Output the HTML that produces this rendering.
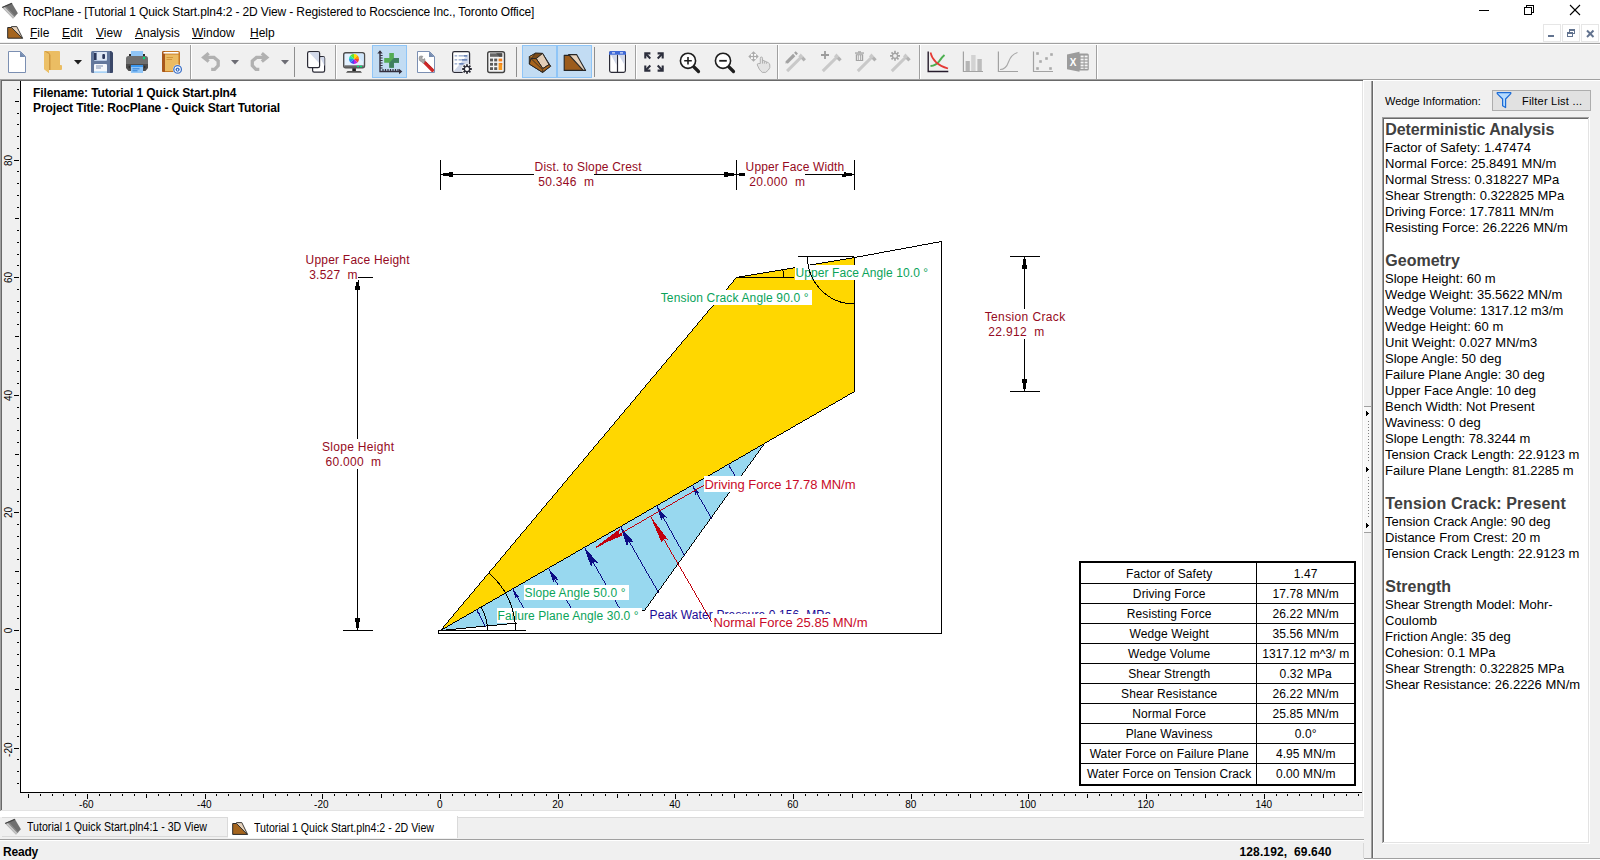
<!DOCTYPE html>
<html lang="en"><head><meta charset="utf-8"><title>RocPlane</title>
<style>

html,body{margin:0;padding:0}
body{width:1600px;height:860px;overflow:hidden;position:relative;background:#f0f0f0;
 font-family:"Liberation Sans",sans-serif;font-size:12px;color:#000}
.a{position:absolute}
.t{position:absolute;white-space:nowrap;line-height:1}
#titlebar{left:0;top:0;width:1600px;height:42px;background:#fff}
#title{left:23px;top:6px;font-size:12px;letter-spacing:-0.125px}
.menu{top:27px;font-size:12px}
.menu u{text-decoration:underline;text-decoration-thickness:1px;text-underline-offset:1px}
.ln{position:absolute}
.tab{position:absolute;font-size:12px;white-space:nowrap;line-height:1;transform-origin:0 0;transform:scaleX(0.885)}
#status{left:3px;top:846px;font-weight:bold;font-size:12px;letter-spacing:-0.2px}
#coords{left:1239.5px;top:846px;font-weight:bold;font-size:12px;letter-spacing:0.12px}

#pn text{font-family:"Liberation Sans",sans-serif;white-space:pre}

#dg text{font-family:"Liberation Sans",sans-serif;white-space:pre}

</style></head>
<body>
<div class="a" id="titlebar"></div>
<svg class="a" style="left:1px;top:2px" width="18" height="18" viewBox="0 0 18 18">
<polygon points="1,5.2 10.8,1 16.9,11.3 12,16.4" fill="#6f6f6f"/>
<polygon points="1,5.2 3.4,4.2 13.6,15.1 12,16.4" fill="#c4c4c4"/>
<polygon points="3.4,4.2 4.6,3.7 14.400,14.400 13.600,15.1" fill="#8c8c8c"/>
<polygon points="0.8,5 10.6,0.8 11.400,1.800 1.6,6" fill="#444"/>
</svg>
<div class="t" id="title">RocPlane - [Tutorial 1 Quick Start.pln4:2 - 2D View - Registered to Rocscience Inc., Toronto Office]</div>
<svg class="a" style="left:1470px;top:0" width="130" height="22" viewBox="0 0 130 22" shape-rendering="crispEdges">
<rect x="9" y="10" width="10" height="1" fill="#000"/>
<rect x="56.5" y="5.5" width="7" height="7" fill="none" stroke="#000"/>
<rect x="54.5" y="7.5" width="7" height="7" fill="#fff" stroke="#000"/>
<g shape-rendering="auto" stroke="#000" stroke-width="1.1"><line x1="100" y1="5" x2="110" y2="15"/><line x1="110" y1="5" x2="100" y2="15"/></g>
</svg>
<svg class="a" style="left:6px;top:24px" width="18" height="16" viewBox="0 0 18 16">
<polygon points="1.7,3.5 5.5,3.5 16.3,14.2 1.7,14.2" fill="#a5651e" stroke="#2a2a2a" stroke-width="1"/>
<polygon points="5.5,2.600 10.8,2.6 16.600,14.2 16.3,14.2 5.5,3.5" fill="#e6d2bc" stroke="#2a2a2a" stroke-width="0.9" stroke-linejoin="round"/>
</svg>
<div class="t menu" style="left:30px"><u>F</u>ile</div>
<div class="t menu" style="left:62px"><u>E</u>dit</div>
<div class="t menu" style="left:96px"><u>V</u>iew</div>
<div class="t menu" style="left:135px"><u>A</u>nalysis</div>
<div class="t menu" style="left:192px"><u>W</u>indow</div>
<div class="t menu" style="left:250px"><u>H</u>elp</div>
<svg class="a" style="left:1540px;top:22px" width="60" height="21" viewBox="0 0 60 21" shape-rendering="crispEdges">
<rect x="3.5" y="2.5" width="17" height="17" fill="#fff" stroke="#e6e6e6"/>
<rect x="22.5" y="2.5" width="17" height="17" fill="#fff" stroke="#e6e6e6"/>
<rect x="41.5" y="2.5" width="17" height="17" fill="#fff" stroke="#e6e6e6"/>
<rect x="8" y="13" width="6" height="2" fill="#62738f"/>
<g fill="none" stroke="#62738f"><rect x="29.5" y="7.5" width="5" height="4"/><rect x="27.5" y="10.5" width="5" height="4" fill="#fff"/></g>
<rect x="29" y="7" width="6" height="2" fill="#62738f"/><rect x="27" y="10" width="6" height="2" fill="#62738f"/>
<g shape-rendering="auto" stroke="#62738f" stroke-width="2"><line x1="47" y1="8.5" x2="53.5" y2="15"/><line x1="53.5" y1="8.5" x2="47" y2="15"/></g>
</svg>
<div class="ln" style="left:0px;top:42px;width:1600px;height:1px;background:#f0f0f0;"></div>
<div class="ln" style="left:0px;top:43px;width:1600px;height:1px;background:#a0a0a0;"></div>
<div class="ln" style="left:0px;top:44px;width:1600px;height:1px;background:#ffffff;"></div>
<div class="ln" style="left:0px;top:79px;width:1364px;height:1px;background:#a0a0a0;"></div>
<div class="ln" style="left:0px;top:80px;width:1363px;height:1px;background:#696969;"></div>
<div class="ln" style="left:0px;top:79px;width:1px;height:732px;background:#a0a0a0;"></div>
<div class="ln" style="left:1px;top:80px;width:1px;height:730px;background:#696969;"></div>
<div class="ln" style="left:1362px;top:81px;width:1px;height:730px;background:#e3e3e3;"></div>
<div class="ln" style="left:1363px;top:80px;width:1px;height:732px;background:#ffffff;"></div>
<div class="ln" style="left:1px;top:810px;width:1362px;height:1px;background:#e3e3e3;"></div>
<div class="ln" style="left:0px;top:811px;width:1364px;height:1px;background:#ffffff;"></div>
<div class="ln" style="left:21px;top:81px;width:1341px;height:711px;background:#ffffff;"></div>
<div class="ln" style="left:20px;top:81px;width:1px;height:712px;background:#000;"></div>
<div class="ln" style="left:20px;top:792px;width:1342px;height:1px;background:#000;"></div>
<div class="ln" style="left:0px;top:812px;width:1364px;height:5px;background:#ffffff;"></div>
<div class="ln" style="left:2px;top:817px;width:226px;height:1px;background:#dadada;"></div>
<div class="ln" style="left:227px;top:817px;width:1px;height:20px;background:#dadada;"></div>
<div class="ln" style="left:2px;top:836px;width:226px;height:1px;background:#dadada;"></div>
<div class="ln" style="left:228px;top:816px;width:229px;height:22px;background:#ffffff;"></div>
<div class="ln" style="left:457px;top:816px;width:1px;height:22px;background:#dadada;"></div>
<div class="ln" style="left:458px;top:817px;width:906px;height:1px;background:#dadada;"></div>
<div class="ln" style="left:0px;top:839px;width:1364px;height:1px;background:#a0a0a0;"></div>
<div class="ln" style="left:0px;top:840px;width:1364px;height:1px;background:#ffffff;"></div>
<svg class="a" style="left:4px;top:818px" width="18" height="18" viewBox="0 0 18 18">
<polygon points="1,5.2 10.8,1 16.9,11.3 12,16.4" fill="#6f6f6f"/>
<polygon points="1,5.2 3.4,4.2 13.6,15.1 12,16.4" fill="#c4c4c4"/>
<polygon points="3.4,4.2 4.6,3.7 14.400,14.400 13.600,15.1" fill="#8c8c8c"/>
<polygon points="0.8,5 10.6,0.8 11.400,1.800 1.6,6" fill="#444"/>
</svg>
<div class="tab" style="left:27px;top:821px">Tutorial 1 Quick Start.pln4:1 - 3D View</div>
<svg class="a" style="left:231px;top:820px" width="18" height="16" viewBox="0 0 18 16">
<polygon points="1.7,3.5 5.5,3.5 16.3,14.4 1.7,14.4" fill="#a5651e" stroke="#2a2a2a" stroke-width="1"/>
<polygon points="5.5,2.600 10.8,2.6 16.600,14.4 16.3,14.4 5.5,3.5" fill="#e6d2bc" stroke="#2a2a2a" stroke-width="0.9" stroke-linejoin="round"/>
</svg>
<div class="tab" style="left:254px;top:822px">Tutorial 1 Quick Start.pln4:2 - 2D View</div>
<div class="t" id="status">Ready</div>
<div class="t" id="coords">128.192,&nbsp; 69.640</div>
<div class="ln" style="left:190px;top:45px;width:1px;height:34px;background:#a0a0a0;"></div>
<div class="ln" style="left:191px;top:45px;width:1px;height:34px;background:#ffffff;"></div>
<div class="ln" style="left:335px;top:45px;width:1px;height:34px;background:#a0a0a0;"></div>
<div class="ln" style="left:336px;top:45px;width:1px;height:34px;background:#ffffff;"></div>
<div class="ln" style="left:635px;top:45px;width:1px;height:34px;background:#a0a0a0;"></div>
<div class="ln" style="left:636px;top:45px;width:1px;height:34px;background:#ffffff;"></div>
<div class="ln" style="left:777px;top:45px;width:1px;height:34px;background:#a0a0a0;"></div>
<div class="ln" style="left:778px;top:45px;width:1px;height:34px;background:#ffffff;"></div>
<div class="ln" style="left:919px;top:45px;width:1px;height:34px;background:#a0a0a0;"></div>
<div class="ln" style="left:920px;top:45px;width:1px;height:34px;background:#ffffff;"></div>
<div class="ln" style="left:1096px;top:45px;width:1px;height:34px;background:#a0a0a0;"></div>
<div class="ln" style="left:1097px;top:45px;width:1px;height:34px;background:#ffffff;"></div>
<div class="ln" style="left:294px;top:47px;width:1px;height:30px;background:#8e8e8e;"></div>
<div class="ln" style="left:516px;top:47px;width:1px;height:30px;background:#8e8e8e;"></div>
<div class="ln" style="left:594px;top:47px;width:1px;height:30px;background:#8e8e8e;"></div>
<div class="a" style="left:372px;top:45px;width:33px;height:31px;background:#c2dcf3;border:1px solid #8fc5f7"></div>
<div class="a" style="left:522px;top:45px;width:33px;height:31px;background:#c2dcf3;border:1px solid #8fc5f7"></div>
<div class="a" style="left:557px;top:45px;width:33px;height:31px;background:#c2dcf3;border:1px solid #8fc5f7"></div>
<svg class="a" style="left:0;top:44px" width="1600" height="36" viewBox="0 44 1600 36">
<g><path d="M8.5,51.5 H20.5 L25.5,56.5 V72.5 H8.5 Z" fill="#fff" stroke="#7b8fb2" stroke-width="1"/>
<path d="M20,51.5 L25.5,57 H20 Z" fill="#748bb0"/></g>
<g><path d="M45,51 H59 Q60,51 60,52 V65 H61 Q62,65 62,66 V69 Q62,70 61,70 H49 V73 L44,69 V52 Q44,51 45,51 Z" fill="#ebbd63"/>
<path d="M44,51.2 L49,54 V73 L44,69 Z" fill="#ecc067"/>
<path d="M45.5,51 Q49.5,52 50.5,55 V70 H49 V54 L44.5,51.3 Z" fill="#cf9840"/></g>
<polygon points="74,60 82,60 78,64.5" fill="#1e1e1e"/><polygon points="231,60 239,60 235,64.5" fill="#6c6c74"/><polygon points="281,60 289,60 285,64.5" fill="#6c6c74"/>
<g><path d="M92.5,51 H111 L113,53 V71.5 Q113,73 111.5,73 H92.5 Q91,73 91,71.5 V52.5 Q91,51 92.5,51 Z" fill="#63779c"/>
<path d="M110,51 H111 L113,53 V71.5 Q113,73 111.5,73 H110 Z" fill="#3a4768"/>
<rect x="94" y="52" width="13" height="9" rx="1" fill="#b7c8e3"/><rect x="97" y="52" width="10" height="8" rx="1" fill="#dfe7f4"/>
<rect x="94" y="53" width="2.5" height="7" fill="#2b365a"/>
<rect x="102.3" y="54" width="2.7" height="5" rx="1" fill="#2b365a"/>
<path d="M94,65 Q94,64 95,64 H106 Q107,64 107,65 V73 H94 Z" fill="#f6f8fc"/>
<rect x="94" y="71.3" width="13" height="1.7" fill="#a9d3f7"/>
<rect x="96" y="65.5" width="7" height="1" fill="#7c8db0"/><rect x="96" y="67.5" width="5" height="1" fill="#7c8db0"/></g>
<g><rect x="131" y="51" width="12" height="7" fill="#90c5f6"/>
<rect x="129" y="54" width="2" height="3" fill="#2c2c2c"/><rect x="143" y="54" width="2" height="3" fill="#2c2c2c"/>
<path d="M128.5,56 H145.5 Q148,56 148,58.5 V65 H126 V58.5 Q126,56 128.5,56 Z" fill="#6f6f6f"/>
<path d="M126,64 H148 V68 L145.5,71 H128.5 L126,68 Z" fill="#4c4c4c"/>
<path d="M128,67 l2,-1.6 v3.2 z M146,67 l-2,-1.6 v3.2 z" fill="#2e2e2e"/>
<circle cx="144" cy="58" r="1.2" fill="#00e676"/>
<rect x="131" y="65" width="12" height="8" fill="#90c5f6"/><rect x="131" y="65" width="12" height="2" fill="#3b97ee"/>
<rect x="132.5" y="68.3" width="7" height="1" fill="#2f80d8"/><rect x="132.5" y="70.3" width="5" height="1" fill="#2f80d8"/></g>
<g><path d="M163.5,51 H178.5 Q180,51 180,52.5 V70.5 Q180,72 178.5,72 H163.5 Q162,72 162,70.5 V52.5 Q162,51 163.5,51 Z" fill="#c57824"/>
<path d="M162,52.5 Q162,51 163.5,51 H165 V72 H163.5 Q162,72 162,70.5 Z" fill="#a8581c"/>
<rect x="165" y="54.5" width="13.5" height="16.5" fill="#ebbb62"/>
<rect x="163.5" y="52" width="15" height="1.6" fill="#fff"/>
<rect x="166.5" y="57" width="6.5" height="1" fill="#d2953a"/><rect x="166.5" y="59" width="5.5" height="1" fill="#d2953a"/>
<circle cx="177.6" cy="69.4" r="4.8" fill="#f4f4f4"/><circle cx="177.6" cy="69.4" r="3.8" fill="#fff" stroke="#3a6fc6" stroke-width="1.3"/>
<circle cx="177.6" cy="69.6" r="2.1" fill="#3a6fc6"/><rect x="177.100" y="68.9" width="1" height="1.8" fill="#fff"/></g>
<g fill="none" stroke="#b1b1b1" stroke-width="3.3" stroke-linejoin="miter">
<path d="M208.7,53.3 L203.7,57.4 L208.7,61.5"/><path d="M204.5,57.4 H214 L218.2,61 V65.6 L214.6,69.3 H211.2"/>
<path d="M261.8,53.3 L266.8,57.4 L261.8,61.5"/><path d="M266,57.4 H256.500 L252.3,61 V65.6 L255.900,69.3 H259.3"/></g>
<g stroke="#2b2b36" stroke-width="1.2"><rect x="312.6" y="56.6" width="12" height="15.6" rx="1.6" fill="#fff"/>
<path d="M320,57 H323.5 Q324.5,57 324.5,58 V66 Z" fill="#d2d9ea" stroke="none"/>
<rect x="307.6" y="51.6" width="12" height="16" rx="1.6" fill="#fff"/>
<path d="M309,52.3 H318 Q319,52.3 319,53.3 V63 Z" fill="#d2d9ea" stroke="none"/></g>
<g><rect x="343.7" y="52.7" width="20.8" height="15" rx="2" fill="#e4f2ff" stroke="#4e4e4e" stroke-width="1.4"/>
<path d="M353,53.5 H362 Q363.7,53.5 363.7,55 V62 Z" fill="#cfe6fb"/>
<rect x="344.4" y="65.3" width="19.4" height="2.2" fill="#6a6a6a"/>
<rect x="357" y="65.8" width="2" height="1.4" fill="#00e676"/><rect x="360" y="65.8" width="2" height="1.4" fill="#00e676"/>
<rect x="352.3" y="68.3" width="3.6" height="3" fill="#1e1e1e"/><path d="M347.5,71 H360.5 L362,72.8 H346 Z" fill="#555"/>
<g transform="translate(354 59)">
<path d="M0,0 L0,-5 A5,5 0 0 1 3.54,-3.54 Z" fill="#ffe000"/><path d="M0,0 L3.54,-3.54 A5,5 0 0 1 5,0 Z" fill="#ff9800"/>
<path d="M0,0 L5,0 A5,5 0 0 1 3.54,3.54 Z" fill="#f44336"/><path d="M0,0 L3.54,3.54 A5,5 0 0 1 0,5 Z" fill="#c020e0"/>
<path d="M0,0 L0,5 A5,5 0 0 1 -3.54,3.54 Z" fill="#5040f0"/><path d="M0,0 L-3.54,3.54 A5,5 0 0 1 -5,0 Z" fill="#2090f0"/>
<path d="M0,0 L-5,0 A5,5 0 0 1 -3.54,-3.54 Z" fill="#20e0b0"/><path d="M0,0 L-3.54,-3.54 A5,5 0 0 1 0,-5 Z" fill="#60e030"/></g></g>
<g><path d="M380,51 V71.5 H401" fill="none" stroke="#34303f" stroke-width="1.4"/>
<path d="M377.3,53.6 L380,50.3 L382.7,53.6 Z" fill="#34303f"/><path d="M399,68.8 L402.3,71.5 L399,74.2 Z" fill="#34303f"/>
<path d="M380,55.5 h2.6 M380,58 h2.6 M380,60.5 h2.6 M380,63 h2.6 M380,65.5 h2.6 M380,68 h2.6 M383,71.5 v-2.6 M385.5,71.5 v-2.6 M388,71.5 v-2.6 M390.500,71.5 v-2.6 M393,71.5 v-2.6 M395.5,71.5 v-2.6 M398,71.5 v-2.6" stroke="#34303f" stroke-width="1.2"/>
<path d="M389.3,53 H393.9 V58 H399 V62.7 H393.9 V67.7 H389.3 V62.7 H384.2 V58 H389.3 Z" fill="#54ac55"/>
<path d="M399,58 V62.7 H393.9 V67.7 H389.3 V62.7 L393.9,58 Z" fill="#3f7f60"/></g>
<g><path d="M417.5,51.5 H429.5 L434.5,56.5 V72.5 H417.5 Z" fill="#fff" stroke="#7b8fb2" stroke-width="1"/>
<path d="M429,51.5 L434.5,57 H429 Z" fill="#748bb0"/>
<path d="M424.8,62.6 L432.4,70.2" stroke="#cf2828" stroke-width="3.4" stroke-linecap="round"/>
<path d="M425.8,62 L433.2,69.400" stroke="#a51e1e" stroke-width="1" stroke-dasharray="1 1"/>
<path d="M419.6,56.4 Q421.5,55.6 422.8,56.4 L421.6,58.2 L423.2,59.6 L424.6,58.6 Q425.3,60.5 424.6,62.2 L423.4,63.4 Q421.5,61.5 419.6,60.6 Q418.8,58.2 419.6,56.4 Z" fill="#a9a9a9" stroke="#777" stroke-width="0.6"/></g>
<g><rect x="452.6" y="51.6" width="17" height="20.8" rx="1.8" fill="#fff" stroke="#2b2b36" stroke-width="1.2"/>
<path d="M468.8,53 V71.6 H453.6 Z" fill="#d2d9ea"/>
<g fill="#a9b8d6"><rect x="454.6" y="55" width="2.6" height="1.6"/><rect x="454.6" y="59" width="2.6" height="1.6"/><rect x="454.6" y="63" width="2.6" height="1.6"/>
<rect x="458.6" y="55" width="8.6" height="1.6"/><rect x="458.6" y="59" width="8.6" height="1.6"/><rect x="458.6" y="63" width="6" height="1.6"/></g>
<g fill="#6d86b8"><rect x="464" y="55" width="3.2" height="1.6"/><rect x="462" y="59" width="5.2" height="1.6"/><rect x="459.500" y="63" width="4" height="1.6"/></g>
<circle cx="467" cy="69" r="5.6" fill="#f0f0f0"/>
<g stroke="#2b2b36" stroke-width="1.8" stroke-linecap="butt"><path d="M467,64.2 V73.8 M462.2,69 H471.8 M463.6,65.6 L470.4,72.4 M470.4,65.6 L463.6,72.4"/></g>
<circle cx="467" cy="69" r="3.1" fill="#2b2b36"/><circle cx="467" cy="69" r="2" fill="#fff"/></g>
<g><rect x="487.700" y="51.7" width="16.8" height="20.8" rx="2" fill="#f3f3f3" stroke="#444" stroke-width="1.4"/>
<rect x="490" y="53.3" width="12.2" height="3.5" fill="#666"/><path d="M496,53.3 H502.2 V56.8 H499.500 Z" fill="#4c4c4c"/>
<g fill="#5a5a5a"><rect x="490" y="58.6" width="3" height="2.8"/><rect x="494.2" y="58.6" width="3" height="2.8"/>
<rect x="490" y="62.9" width="3" height="2.8"/><rect x="494.2" y="62.9" width="3" height="2.8"/>
<rect x="490" y="67.2" width="3" height="2.8"/><rect x="494.2" y="67.2" width="3" height="2.8"/></g>
<rect x="498.600" y="58.6" width="3.600" height="2.8" fill="#f07f1c"/><rect x="498.600" y="62.9" width="3.600" height="7.1" fill="#f7991f"/>
<path d="M498.6,62.9 H502.2 V65 Z" fill="#ee7a18"/></g>
<g stroke="#262626" stroke-width="1" stroke-linejoin="round">
<path d="M529.300,56.7 L535.6,53.2 L542.600,53.4 L550.600,66.2 L542.600,72.4 L529.300,64 Z" fill="#a6631b"/>
<path d="M529.300,56.7 L535.600,53.2 L537,55 L531,58.600 Z" fill="#c37d2c" stroke-width="0.8"/>
<path d="M535.6,53.2 L542.6,53.4 L536.2,58.6 L531,58.6 Z" fill="#7a4a18" stroke-width="0.7"/>
<path d="M536.2,58.6 L542.6,53.4 L549,64.6 L542.8,68.6 Z" fill="#e2cdb6"/>
<path d="M542.8,68.6 L549,64.6 L550.6,66.2 L542.6,72.4 L529.3,64 L531,58.600 L536.2,58.6 Z" fill="#a6631b"/>
<path d="M531,58.6 L542.800,70 L542.6,72.4" fill="none" stroke-width="0.8"/></g>
<g stroke="#262626" stroke-width="1.1" stroke-linejoin="round">
<path d="M564.2,55.4 H569.5 L585.4,70.4 H564.2 Z" fill="#9c5c1c"/>
<path d="M568.6,54.6 H576.6 L585.6,70.4 L583.200,70.4 L569.5,55.4 Z" fill="#e6d1ba"/></g>
<g><rect x="609.6" y="51.6" width="15.800" height="20.8" rx="1.8" fill="#fff" stroke="#2b2b36" stroke-width="1.2"/>
<path d="M610.4,54 H616.6 V65 Z M618.2,54 H624.600 V65 Z" fill="#d2d9ea"/>
<path d="M609,54.8 V53 Q609,51 611,51 H624 Q626,51 626,53 V54.800 Z" fill="#3f6ad8"/>
<rect x="612" y="52.4" width="3" height="1" fill="#fff"/><rect x="620" y="52.4" width="3" height="1" fill="#fff"/>
<path d="M617.5,54.8 V72.400" stroke="#2b2b36" stroke-width="1.2"/></g>
<g fill="none" stroke="#2d2f3d" stroke-width="2.1" stroke-linejoin="miter">
<path d="M645.300,58.500 V53.4 H650.4"/><path d="M646,54.1 L650.3,58.4"/>
<path d="M662.700,58.5 V53.4 H657.6"/><path d="M662,54.1 L657.700,58.4"/>
<path d="M645.3,65.5 V70.600 H650.4"/><path d="M646,69.9 L650.3,65.6"/>
<path d="M662.7,65.5 V70.6 H657.6"/><path d="M662,69.9 L657.7,65.600"/></g>
<g><path d="M693.5,66.5 L698.5,71.5" stroke="#1e1e1e" stroke-width="3.2" stroke-linecap="round"/>
<circle cx="688" cy="60.8" r="7.6" fill="#fff" stroke="#1e1e1e" stroke-width="1.600"/>
<path d="M684.2,60.8 H691.8 M688,57 V64.600" stroke="#1e1e1e" stroke-width="1.6"/></g>
<g><path d="M728.5,66.5 L733.5,71.5" stroke="#1e1e1e" stroke-width="3.2" stroke-linecap="round"/>
<circle cx="723" cy="60.8" r="7.6" fill="#fff" stroke="#1e1e1e" stroke-width="1.6"/>
<path d="M719.200,60.8 H726.8" stroke="#1e1e1e" stroke-width="1.8"/></g>
<g><path d="M753.5,51.3 L758.7,56.5 L753.5,61.700 L748.3,56.5 Z" fill="#ababab"/>
<g fill="#fbfbfb"><rect x="750.9" y="53.9" width="2" height="2"/><rect x="754.1" y="53.9" width="2" height="2"/><rect x="750.9" y="57.1" width="2" height="2"/><rect x="754.100" y="57.1" width="2" height="2"/></g>
<path d="M760.3,63.5 V58.3 Q760.3,57 761.4,57 Q762.5,57 762.5,58.3 V60 L768.3,62.7 Q769.8,63.500 769.8,65 V67.600 Q769,70 765.7,72.4 H762.3 Q760.5,71 759.3,69.1 L757.3,65 Q757,63.600 758.4,63.5 Z" fill="#e3e3e3" stroke="#a9a9a9" stroke-width="0.9" stroke-linejoin="round"/>
<path d="M762.5,60 V63.6 M764.4,61.2 V63.600 M766.4,62.2 V63.8" stroke="#a9a9a9" stroke-width="0.9" fill="none"/></g>
<path d="M787.1,71.2 L801.3,57" stroke="#c9c9c9" stroke-width="3.1" stroke-linecap="butt"/><path d="M801.7,57.2 L804.8,60.3" stroke="#b2b2b2" stroke-width="3.3"/><path d="M798.3,56.4 L800.7,53.4 L803.5,56.6 L801.3,58.8 Z" fill="#c9c9c9"/><path d="M786.600,62.6 L794.2,55" stroke="#a3a3a3" stroke-width="3.2"/><path d="M785.3,63.600 L787.5,63 L785.900,61.400 Z" fill="#a3a3a3"/><path d="M795.2,54 L796.800,52.4" stroke="#a3a3a3" stroke-width="3.2"/>
<path d="M822.8,71.2 L837.0,57" stroke="#c9c9c9" stroke-width="3.1" stroke-linecap="butt"/><path d="M837.4,57.2 L840.5,60.3" stroke="#b2b2b2" stroke-width="3.3"/><path d="M834.0,56.4 L836.4,53.4 L839.2,56.6 L837.0,58.8 Z" fill="#c9c9c9"/><path d="M821,55 H829 M825,51 V59" stroke="#9c9c9c" stroke-width="1.8"/>
<path d="M857.8,71.2 L872.0,57" stroke="#c9c9c9" stroke-width="3.1" stroke-linecap="butt"/><path d="M872.4,57.2 L875.5,60.3" stroke="#b2b2b2" stroke-width="3.3"/><path d="M869.0,56.4 L871.4,53.4 L874.2,56.6 L872.0,58.8 Z" fill="#c9c9c9"/><g fill="#a3a3a3"><rect x="855" y="52.4" width="9" height="1.3"/><rect x="858" y="51.3" width="3" height="1.2"/><path d="M855.8,54.3 H863.200 V61 H855.8 Z M857.200,55.300 V60 H858.300 V55.300 Z M859,55.3 V60 H860 V55.3 Z M860.8,55.3 V60 H861.8 V55.3 Z" fill-rule="evenodd"/></g>
<path d="M891.8,71.2 L906.0,57" stroke="#c9c9c9" stroke-width="3.1" stroke-linecap="butt"/><path d="M906.4,57.2 L909.5,60.3" stroke="#b2b2b2" stroke-width="3.3"/><path d="M903.0,56.4 L905.4,53.4 L908.2,56.6 L906.0,58.8 Z" fill="#c9c9c9"/><g stroke="#a3a3a3" stroke-width="1.7" stroke-linecap="butt"><path d="M895,50.800 V60.8 M890,55.8 H900 M891.5,52.3 L898.5,59.3 M898.500,52.3 L891.5,59.300"/></g>
<circle cx="895" cy="55.8" r="3" fill="#a3a3a3"/><circle cx="895" cy="55.8" r="1.900" fill="#f0f0f0"/>
<g fill="none"><path d="M930.5,66 Q936,65.5 939,61.500 Q942,57 944.500,55" stroke="#4caf50" stroke-width="2"/>
<path d="M930.5,52.5 Q933,64 948,68.6" stroke="#e53935" stroke-width="1.600"/>
<path d="M928.2,51.5 V71.5 H948.3" stroke="#261c2c" stroke-width="1.400"/></g>
<g><rect x="965.6" y="61" width="4.2" height="10.500" fill="#b5b5b5"/><rect x="971.200" y="55" width="4.4" height="16.5" fill="#d2d2d2"/><rect x="977.400" y="59" width="4.4" height="12.5" fill="#bcbcbc"/>
<path d="M963.4,51.500 V71.5 H983" fill="none" stroke="#a2a2a2" stroke-width="1.200"/></g>
<g fill="none"><path d="M1000,69.500 Q1006,69.500 1008.500,62 Q1011,54.5 1017.500,52.400" stroke="#a8a8a8" stroke-width="1.1"/>
<path d="M998.4,51.5 V71.5 H1018" stroke="#a2a2a2" stroke-width="1.2"/></g>
<g fill="#ababab"><rect x="1036.200" y="52.200" width="2.6" height="2.6"/><rect x="1050.2" y="53.200" width="2.6" height="2.600"/><rect x="1045.2" y="57.2" width="2.6" height="2.6"/>
<rect x="1039.200" y="60.200" width="2.6" height="2.6"/><rect x="1036.200" y="67.200" width="2.6" height="2.6"/><rect x="1049.2" y="67.2" width="2.6" height="2.6"/>
<path d="M1033.500,51.5 V71.5 H1053" fill="none" stroke="#a2a2a2" stroke-width="1.2"/></g>
<g><rect x="1076" y="53.6" width="12.800" height="16.800" rx="1.5" fill="#9c9c9c"/>
<g fill="#f4f4f4"><rect x="1080.6" y="55.600" width="3" height="1.800"/><rect x="1084.6" y="55.6" width="3" height="1.8"/>
<rect x="1080.6" y="58.600" width="3" height="1.8"/><rect x="1084.600" y="58.6" width="3" height="1.8"/>
<rect x="1080.6" y="61.6" width="3" height="1.8"/><rect x="1084.6" y="61.600" width="3" height="1.8"/>
<rect x="1080.600" y="64.6" width="3" height="1.8"/><rect x="1084.6" y="64.6" width="3" height="1.800"/>
<rect x="1080.6" y="67.6" width="3" height="1.3"/><rect x="1084.6" y="67.6" width="3" height="1.3"/></g>
<path d="M1067,54.4 L1079.500,51.800 V71.800 L1067,69.200 Z" fill="#9c9c9c"/>
<text x="1073.1" y="65.600" font-family="Liberation Sans, sans-serif" font-size="10px" font-weight="bold" fill="#fff" text-anchor="middle">X</text></g>
</svg>
<svg class="a" style="left:0;top:0" width="1364" height="812" viewBox="0 0 1364 812">
<g shape-rendering="crispEdges" fill="#000">
<rect x="17" y="783" width="2" height="1"/><rect x="17" y="771" width="2" height="1"/><rect x="17" y="759" width="2" height="1"/><rect x="14" y="748" width="5" height="1"/><rect x="17" y="736" width="2" height="1"/><rect x="17" y="724" width="2" height="1"/><rect x="17" y="712" width="2" height="1"/><rect x="17" y="701" width="2" height="1"/><rect x="15" y="689" width="4" height="1"/><rect x="17" y="677" width="2" height="1"/><rect x="17" y="665" width="2" height="1"/><rect x="17" y="654" width="2" height="1"/><rect x="17" y="642" width="2" height="1"/><rect x="14" y="630" width="5" height="1"/><rect x="17" y="618" width="2" height="1"/><rect x="17" y="606" width="2" height="1"/><rect x="17" y="595" width="2" height="1"/><rect x="17" y="583" width="2" height="1"/><rect x="15" y="571" width="4" height="1"/><rect x="17" y="559" width="2" height="1"/><rect x="17" y="548" width="2" height="1"/><rect x="17" y="536" width="2" height="1"/><rect x="17" y="524" width="2" height="1"/><rect x="14" y="512" width="5" height="1"/><rect x="17" y="501" width="2" height="1"/><rect x="17" y="489" width="2" height="1"/><rect x="17" y="477" width="2" height="1"/><rect x="17" y="465" width="2" height="1"/><rect x="15" y="454" width="4" height="1"/><rect x="17" y="442" width="2" height="1"/><rect x="17" y="430" width="2" height="1"/><rect x="17" y="418" width="2" height="1"/><rect x="17" y="407" width="2" height="1"/><rect x="14" y="395" width="5" height="1"/><rect x="17" y="383" width="2" height="1"/><rect x="17" y="371" width="2" height="1"/><rect x="17" y="360" width="2" height="1"/><rect x="17" y="348" width="2" height="1"/><rect x="15" y="336" width="4" height="1"/><rect x="17" y="324" width="2" height="1"/><rect x="17" y="312" width="2" height="1"/><rect x="17" y="301" width="2" height="1"/><rect x="17" y="289" width="2" height="1"/><rect x="14" y="277" width="5" height="1"/><rect x="17" y="265" width="2" height="1"/><rect x="17" y="254" width="2" height="1"/><rect x="17" y="242" width="2" height="1"/><rect x="17" y="230" width="2" height="1"/><rect x="15" y="218" width="4" height="1"/><rect x="17" y="207" width="2" height="1"/><rect x="17" y="195" width="2" height="1"/><rect x="17" y="183" width="2" height="1"/><rect x="17" y="171" width="2" height="1"/><rect x="14" y="160" width="5" height="1"/><rect x="17" y="148" width="2" height="1"/><rect x="17" y="136" width="2" height="1"/><rect x="17" y="124" width="2" height="1"/><rect x="17" y="113" width="2" height="1"/><rect x="15" y="101" width="4" height="1"/><rect x="17" y="89" width="2" height="1"/>
<rect x="28" y="794" width="1" height="4"/><rect x="40" y="794" width="1" height="2"/><rect x="52" y="794" width="1" height="2"/><rect x="63" y="794" width="1" height="2"/><rect x="75" y="794" width="1" height="2"/><rect x="87" y="794" width="1" height="5"/><rect x="99" y="794" width="1" height="2"/><rect x="110" y="794" width="1" height="2"/><rect x="122" y="794" width="1" height="2"/><rect x="134" y="794" width="1" height="2"/><rect x="146" y="794" width="1" height="4"/><rect x="158" y="794" width="1" height="2"/><rect x="169" y="794" width="1" height="2"/><rect x="181" y="794" width="1" height="2"/><rect x="193" y="794" width="1" height="2"/><rect x="205" y="794" width="1" height="5"/><rect x="216" y="794" width="1" height="2"/><rect x="228" y="794" width="1" height="2"/><rect x="240" y="794" width="1" height="2"/><rect x="252" y="794" width="1" height="2"/><rect x="263" y="794" width="1" height="4"/><rect x="275" y="794" width="1" height="2"/><rect x="287" y="794" width="1" height="2"/><rect x="299" y="794" width="1" height="2"/><rect x="311" y="794" width="1" height="2"/><rect x="322" y="794" width="1" height="5"/><rect x="334" y="794" width="1" height="2"/><rect x="346" y="794" width="1" height="2"/><rect x="358" y="794" width="1" height="2"/><rect x="369" y="794" width="1" height="2"/><rect x="381" y="794" width="1" height="4"/><rect x="393" y="794" width="1" height="2"/><rect x="405" y="794" width="1" height="2"/><rect x="416" y="794" width="1" height="2"/><rect x="428" y="794" width="1" height="2"/><rect x="440" y="794" width="1" height="5"/><rect x="452" y="794" width="1" height="2"/><rect x="464" y="794" width="1" height="2"/><rect x="475" y="794" width="1" height="2"/><rect x="487" y="794" width="1" height="2"/><rect x="499" y="794" width="1" height="4"/><rect x="511" y="794" width="1" height="2"/><rect x="522" y="794" width="1" height="2"/><rect x="534" y="794" width="1" height="2"/><rect x="546" y="794" width="1" height="2"/><rect x="558" y="794" width="1" height="5"/><rect x="569" y="794" width="1" height="2"/><rect x="581" y="794" width="1" height="2"/><rect x="593" y="794" width="1" height="2"/><rect x="605" y="794" width="1" height="2"/><rect x="617" y="794" width="1" height="4"/><rect x="628" y="794" width="1" height="2"/><rect x="640" y="794" width="1" height="2"/><rect x="652" y="794" width="1" height="2"/><rect x="664" y="794" width="1" height="2"/><rect x="675" y="794" width="1" height="5"/><rect x="687" y="794" width="1" height="2"/><rect x="699" y="794" width="1" height="2"/><rect x="711" y="794" width="1" height="2"/><rect x="722" y="794" width="1" height="2"/><rect x="734" y="794" width="1" height="4"/><rect x="746" y="794" width="1" height="2"/><rect x="758" y="794" width="1" height="2"/><rect x="770" y="794" width="1" height="2"/><rect x="781" y="794" width="1" height="2"/><rect x="793" y="794" width="1" height="5"/><rect x="805" y="794" width="1" height="2"/><rect x="817" y="794" width="1" height="2"/><rect x="828" y="794" width="1" height="2"/><rect x="840" y="794" width="1" height="2"/><rect x="852" y="794" width="1" height="4"/><rect x="864" y="794" width="1" height="2"/><rect x="875" y="794" width="1" height="2"/><rect x="887" y="794" width="1" height="2"/><rect x="899" y="794" width="1" height="2"/><rect x="911" y="794" width="1" height="5"/><rect x="922" y="794" width="1" height="2"/><rect x="934" y="794" width="1" height="2"/><rect x="946" y="794" width="1" height="2"/><rect x="958" y="794" width="1" height="2"/><rect x="970" y="794" width="1" height="4"/><rect x="981" y="794" width="1" height="2"/><rect x="993" y="794" width="1" height="2"/><rect x="1005" y="794" width="1" height="2"/><rect x="1017" y="794" width="1" height="2"/><rect x="1028" y="794" width="1" height="5"/><rect x="1040" y="794" width="1" height="2"/><rect x="1052" y="794" width="1" height="2"/><rect x="1064" y="794" width="1" height="2"/><rect x="1075" y="794" width="1" height="2"/><rect x="1087" y="794" width="1" height="4"/><rect x="1099" y="794" width="1" height="2"/><rect x="1111" y="794" width="1" height="2"/><rect x="1123" y="794" width="1" height="2"/><rect x="1134" y="794" width="1" height="2"/><rect x="1146" y="794" width="1" height="5"/><rect x="1158" y="794" width="1" height="2"/><rect x="1170" y="794" width="1" height="2"/><rect x="1181" y="794" width="1" height="2"/><rect x="1193" y="794" width="1" height="2"/><rect x="1205" y="794" width="1" height="4"/><rect x="1217" y="794" width="1" height="2"/><rect x="1228" y="794" width="1" height="2"/><rect x="1240" y="794" width="1" height="2"/><rect x="1252" y="794" width="1" height="2"/><rect x="1264" y="794" width="1" height="5"/><rect x="1276" y="794" width="1" height="2"/><rect x="1287" y="794" width="1" height="2"/><rect x="1299" y="794" width="1" height="2"/><rect x="1311" y="794" width="1" height="2"/><rect x="1323" y="794" width="1" height="4"/><rect x="1334" y="794" width="1" height="2"/><rect x="1346" y="794" width="1" height="2"/><rect x="1358" y="794" width="1" height="2"/>
</g>
<g font-family="Liberation Sans, sans-serif" font-size="10px" fill="#000" text-anchor="middle">
<text x="86.3" y="807.6">-60</text><text x="204.3" y="807.6">-40</text><text x="321.3" y="807.6">-20</text><text x="439.8" y="807.6">0</text><text x="557.8" y="807.6">20</text><text x="674.8" y="807.6">40</text><text x="792.8" y="807.6">60</text><text x="910.8" y="807.6">80</text><text x="1027.8" y="807.6">100</text><text x="1145.8" y="807.6">120</text><text x="1263.8" y="807.6">140</text>
<text transform="translate(12 749.7) rotate(-90)">-20</text><text transform="translate(12 630.5) rotate(-90)">0</text><text transform="translate(12 512.5) rotate(-90)">20</text><text transform="translate(12 395.5) rotate(-90)">40</text><text transform="translate(12 277.5) rotate(-90)">60</text><text transform="translate(12 160.5) rotate(-90)">80</text>
</g>
</svg>
<svg id="dg" class="a" style="left:0;top:0" width="1364" height="812" viewBox="0 0 1364 812">
<g shape-rendering="crispEdges">
<polygon points="440.5,630.5 736.5,277.5 854.5,257.5 854.5,391.5" fill="#ffd700"/>
<polygon points="440.5,630.5 764.5,443.5 644.5,610.5" fill="#98d8ef"/>
<path d="M438 630h1v4h-1zM438 633h504v1h-504zM941 241h1v393h-1zM939 241h3v1h-3zM933 242h6v1h-6zM928 243h5v1h-5zM922 244h6v1h-6zM917 245h5v1h-5zM912 246h5v1h-5zM906 247h6v1h-6zM901 248h5v1h-5zM895 249h6v1h-6zM890 250h5v1h-5zM884 251h6v1h-6zM879 252h5v1h-5zM874 253h5v1h-5zM868 254h6v1h-6zM863 255h5v1h-5zM857 256h6v1h-6zM854 257h3v1h-3z" fill="#000"/>
<path d="M438 630h3v1h-3zM440 630h1v1h-1zM441 629h1v1h-1zM442 628h1v1h-1zM443 626h1v2h-1zM444 625h1v1h-1zM445 624h1v1h-1zM446 623h1v1h-1zM447 622h1v1h-1zM448 620h1v2h-1zM449 619h1v1h-1zM450 618h1v1h-1zM451 617h1v1h-1zM452 616h1v1h-1zM453 614h1v2h-1zM454 613h1v1h-1zM455 612h1v1h-1zM456 611h1v1h-1zM457 610h1v1h-1zM458 608h1v2h-1zM459 607h1v1h-1zM460 606h1v1h-1zM461 605h1v1h-1zM462 604h1v1h-1zM463 602h1v2h-1zM464 601h1v1h-1zM465 600h1v1h-1zM466 599h1v1h-1zM467 598h1v1h-1zM468 597h1v1h-1zM469 595h1v2h-1zM470 594h1v1h-1zM471 593h1v1h-1zM472 592h1v1h-1zM473 591h1v1h-1zM474 589h1v2h-1zM475 588h1v1h-1zM476 587h1v1h-1zM477 586h1v1h-1zM478 585h1v1h-1zM479 583h1v2h-1zM480 582h1v1h-1zM481 581h1v1h-1zM482 580h1v1h-1zM483 579h1v1h-1zM484 577h1v2h-1zM485 576h1v1h-1zM486 575h1v1h-1zM487 574h1v1h-1zM488 573h1v1h-1zM489 571h1v2h-1zM490 570h1v1h-1zM491 569h1v1h-1zM492 568h1v1h-1zM493 567h1v1h-1zM494 566h1v1h-1zM495 564h1v2h-1zM496 563h1v1h-1zM497 562h1v1h-1zM498 561h1v1h-1zM499 560h1v1h-1zM500 558h1v2h-1zM501 557h1v1h-1zM502 556h1v1h-1zM503 555h1v1h-1zM504 554h1v1h-1zM505 552h1v2h-1zM506 551h1v1h-1zM507 550h1v1h-1zM508 549h1v1h-1zM509 548h1v1h-1zM510 546h1v2h-1zM511 545h1v1h-1zM512 544h1v1h-1zM513 543h1v1h-1zM514 542h1v1h-1zM515 540h1v2h-1zM516 539h1v1h-1zM517 538h1v1h-1zM518 537h1v1h-1zM519 536h1v1h-1zM520 534h1v2h-1zM521 533h1v1h-1zM522 532h1v1h-1zM523 531h1v1h-1zM524 530h1v1h-1zM525 529h1v1h-1zM526 527h1v2h-1zM527 526h1v1h-1zM528 525h1v1h-1zM529 524h1v1h-1zM530 523h1v1h-1zM531 521h1v2h-1zM532 520h1v1h-1zM533 519h1v1h-1zM534 518h1v1h-1zM535 517h1v1h-1zM536 515h1v2h-1zM537 514h1v1h-1zM538 513h1v1h-1zM539 512h1v1h-1zM540 511h1v1h-1zM541 509h1v2h-1zM542 508h1v1h-1zM543 507h1v1h-1zM544 506h1v1h-1zM545 505h1v1h-1zM546 503h1v2h-1zM547 502h1v1h-1zM548 501h1v1h-1zM549 500h1v1h-1zM550 499h1v1h-1zM551 498h1v1h-1zM552 496h1v2h-1zM553 495h1v1h-1zM554 494h1v1h-1zM555 493h1v1h-1zM556 492h1v1h-1zM557 490h1v2h-1zM558 489h1v1h-1zM559 488h1v1h-1zM560 487h1v1h-1zM561 486h1v1h-1zM562 484h1v2h-1zM563 483h1v1h-1zM564 482h1v1h-1zM565 481h1v1h-1zM566 480h1v1h-1zM567 478h1v2h-1zM568 477h1v1h-1zM569 476h1v1h-1zM570 475h1v1h-1zM571 474h1v1h-1zM572 472h1v2h-1zM573 471h1v1h-1zM574 470h1v1h-1zM575 469h1v1h-1zM576 468h1v1h-1zM577 467h1v1h-1zM578 465h1v2h-1zM579 464h1v1h-1zM580 463h1v1h-1zM581 462h1v1h-1zM582 461h1v1h-1zM583 459h1v2h-1zM584 458h1v1h-1zM585 457h1v1h-1zM586 456h1v1h-1zM587 455h1v1h-1zM588 453h1v2h-1zM589 452h1v1h-1zM590 451h1v1h-1zM591 450h1v1h-1zM592 449h1v1h-1zM593 447h1v2h-1zM594 446h1v1h-1zM595 445h1v1h-1zM596 444h1v1h-1zM597 443h1v1h-1zM598 441h1v2h-1zM599 440h1v1h-1zM600 439h1v1h-1zM601 438h1v1h-1zM602 437h1v1h-1zM603 436h1v1h-1zM604 434h1v2h-1zM605 433h1v1h-1zM606 432h1v1h-1zM607 431h1v1h-1zM608 430h1v1h-1zM609 428h1v2h-1zM610 427h1v1h-1zM611 426h1v1h-1zM612 425h1v1h-1zM613 424h1v1h-1zM614 422h1v2h-1zM615 421h1v1h-1zM616 420h1v1h-1zM617 419h1v1h-1zM618 418h1v1h-1zM619 416h1v2h-1zM620 415h1v1h-1zM621 414h1v1h-1zM622 413h1v1h-1zM623 412h1v1h-1zM624 410h1v2h-1zM625 409h1v1h-1zM626 408h1v1h-1zM627 407h1v1h-1zM628 406h1v1h-1zM629 405h1v1h-1zM630 403h1v2h-1zM631 402h1v1h-1zM632 401h1v1h-1zM633 400h1v1h-1zM634 399h1v1h-1zM635 397h1v2h-1zM636 396h1v1h-1zM637 395h1v1h-1zM638 394h1v1h-1zM639 393h1v1h-1zM640 391h1v2h-1zM641 390h1v1h-1zM642 389h1v1h-1zM643 388h1v1h-1zM644 387h1v1h-1zM645 385h1v2h-1zM646 384h1v1h-1zM647 383h1v1h-1zM648 382h1v1h-1zM649 381h1v1h-1zM650 379h1v2h-1zM651 378h1v1h-1zM652 377h1v1h-1zM653 376h1v1h-1zM654 375h1v1h-1zM655 374h1v1h-1zM656 372h1v2h-1zM657 371h1v1h-1zM658 370h1v1h-1zM659 369h1v1h-1zM660 368h1v1h-1zM661 366h1v2h-1zM662 365h1v1h-1zM663 364h1v1h-1zM664 363h1v1h-1zM665 362h1v1h-1zM666 360h1v2h-1zM667 359h1v1h-1zM668 358h1v1h-1zM669 357h1v1h-1zM670 356h1v1h-1zM671 354h1v2h-1zM672 353h1v1h-1zM673 352h1v1h-1zM674 351h1v1h-1zM675 350h1v1h-1zM676 348h1v2h-1zM677 347h1v1h-1zM678 346h1v1h-1zM679 345h1v1h-1zM680 344h1v1h-1zM681 342h1v2h-1zM682 341h1v1h-1zM683 340h1v1h-1zM684 339h1v1h-1zM685 338h1v1h-1zM686 337h1v1h-1zM687 335h1v2h-1zM688 334h1v1h-1zM689 333h1v1h-1zM690 332h1v1h-1zM691 331h1v1h-1zM692 329h1v2h-1zM693 328h1v1h-1zM694 327h1v1h-1zM695 326h1v1h-1zM696 325h1v1h-1zM697 323h1v2h-1zM698 322h1v1h-1zM699 321h1v1h-1zM700 320h1v1h-1zM701 319h1v1h-1zM702 317h1v2h-1zM703 316h1v1h-1zM704 315h1v1h-1zM705 314h1v1h-1zM706 313h1v1h-1zM707 311h1v2h-1zM708 310h1v1h-1zM709 309h1v1h-1zM710 308h1v1h-1zM711 307h1v1h-1zM712 306h1v1h-1zM713 304h1v2h-1zM714 303h1v1h-1zM715 302h1v1h-1zM716 301h1v1h-1zM717 300h1v1h-1zM718 298h1v2h-1zM719 297h1v1h-1zM720 296h1v1h-1zM721 295h1v1h-1zM722 294h1v1h-1zM723 292h1v2h-1zM724 291h1v1h-1zM725 290h1v1h-1zM726 289h1v1h-1zM727 288h1v1h-1zM728 286h1v2h-1zM729 285h1v1h-1zM730 284h1v1h-1zM731 283h1v1h-1zM732 282h1v1h-1zM733 280h1v2h-1zM734 279h1v1h-1zM735 278h1v1h-1zM736 277h1v1h-1zM736 277h3v1h-3zM739 276h6v1h-6zM745 275h6v1h-6zM751 274h6v1h-6zM757 273h6v1h-6zM763 272h6v1h-6zM769 271h6v1h-6zM775 270h6v1h-6zM781 269h6v1h-6zM787 268h6v1h-6zM793 267h5v1h-5zM798 266h6v1h-6zM804 265h6v1h-6zM810 264h6v1h-6zM816 263h6v1h-6zM822 262h6v1h-6zM828 261h6v1h-6zM834 260h6v1h-6zM840 259h6v1h-6zM846 258h6v1h-6zM852 257h3v1h-3zM854 257h1v135h-1zM854 391h1v1h-1zM852 392h2v1h-2zM850 393h2v1h-2zM848 394h2v1h-2zM847 395h1v1h-1zM845 396h2v1h-2zM843 397h2v1h-2zM842 398h1v1h-1zM840 399h2v1h-2zM838 400h2v1h-2zM836 401h2v1h-2zM835 402h1v1h-1zM833 403h2v1h-2zM831 404h2v1h-2zM829 405h2v1h-2zM828 406h1v1h-1zM826 407h2v1h-2zM824 408h2v1h-2zM822 409h2v1h-2zM821 410h1v1h-1zM819 411h2v1h-2zM817 412h2v1h-2zM816 413h1v1h-1zM814 414h2v1h-2zM812 415h2v1h-2zM810 416h2v1h-2zM809 417h1v1h-1zM807 418h2v1h-2zM805 419h2v1h-2zM803 420h2v1h-2zM802 421h1v1h-1zM800 422h2v1h-2zM798 423h2v1h-2zM796 424h2v1h-2zM795 425h1v1h-1zM793 426h2v1h-2zM791 427h2v1h-2zM790 428h1v1h-1zM788 429h2v1h-2zM786 430h2v1h-2zM784 431h2v1h-2zM783 432h1v1h-1zM781 433h2v1h-2zM779 434h2v1h-2zM777 435h2v1h-2zM776 436h1v1h-1zM774 437h2v1h-2zM772 438h2v1h-2zM770 439h2v1h-2zM769 440h1v1h-1zM767 441h2v1h-2zM765 442h2v1h-2zM764 443h1v1h-1zM762 444h2v1h-2zM760 445h2v1h-2zM758 446h2v1h-2zM757 447h1v1h-1zM755 448h2v1h-2zM753 449h2v1h-2zM751 450h2v1h-2zM750 451h1v1h-1zM748 452h2v1h-2zM746 453h2v1h-2zM745 454h1v1h-1zM743 455h2v1h-2zM741 456h2v1h-2zM739 457h2v1h-2zM738 458h1v1h-1zM736 459h2v1h-2zM734 460h2v1h-2zM732 461h2v1h-2zM731 462h1v1h-1zM729 463h2v1h-2zM727 464h2v1h-2zM725 465h2v1h-2zM724 466h1v1h-1zM722 467h2v1h-2zM720 468h2v1h-2zM719 469h1v1h-1zM717 470h2v1h-2zM715 471h2v1h-2zM713 472h2v1h-2zM712 473h1v1h-1zM710 474h2v1h-2zM708 475h2v1h-2zM706 476h2v1h-2zM705 477h1v1h-1zM703 478h2v1h-2zM701 479h2v1h-2zM699 480h2v1h-2zM698 481h1v1h-1zM696 482h2v1h-2zM694 483h2v1h-2zM693 484h1v1h-1zM691 485h2v1h-2zM689 486h2v1h-2zM687 487h2v1h-2zM686 488h1v1h-1zM684 489h2v1h-2zM682 490h2v1h-2zM680 491h2v1h-2zM679 492h1v1h-1zM677 493h2v1h-2zM675 494h2v1h-2zM673 495h2v1h-2zM672 496h1v1h-1zM670 497h2v1h-2zM668 498h2v1h-2zM667 499h1v1h-1zM665 500h2v1h-2zM663 501h2v1h-2zM661 502h2v1h-2zM660 503h1v1h-1zM658 504h2v1h-2zM656 505h2v1h-2zM654 506h2v1h-2zM653 507h1v1h-1zM651 508h2v1h-2zM649 509h2v1h-2zM647 510h2v1h-2zM646 511h1v1h-1zM644 512h2v1h-2zM642 513h2v1h-2zM641 514h1v1h-1zM639 515h2v1h-2zM637 516h2v1h-2zM635 517h2v1h-2zM634 518h1v1h-1zM632 519h2v1h-2zM630 520h2v1h-2zM628 521h2v1h-2zM627 522h1v1h-1zM625 523h2v1h-2zM623 524h2v1h-2zM622 525h1v1h-1zM620 526h2v1h-2zM618 527h2v1h-2zM616 528h2v1h-2zM615 529h1v1h-1zM613 530h2v1h-2zM611 531h2v1h-2zM609 532h2v1h-2zM608 533h1v1h-1zM606 534h2v1h-2zM604 535h2v1h-2zM602 536h2v1h-2zM601 537h1v1h-1zM599 538h2v1h-2zM597 539h2v1h-2zM596 540h1v1h-1zM594 541h2v1h-2zM592 542h2v1h-2zM590 543h2v1h-2zM589 544h1v1h-1zM587 545h2v1h-2zM585 546h2v1h-2zM583 547h2v1h-2zM582 548h1v1h-1zM580 549h2v1h-2zM578 550h2v1h-2zM576 551h2v1h-2zM575 552h1v1h-1zM573 553h2v1h-2zM571 554h2v1h-2zM570 555h1v1h-1zM568 556h2v1h-2zM566 557h2v1h-2zM564 558h2v1h-2zM563 559h1v1h-1zM561 560h2v1h-2zM559 561h2v1h-2zM557 562h2v1h-2zM556 563h1v1h-1zM554 564h2v1h-2zM552 565h2v1h-2zM550 566h2v1h-2zM549 567h1v1h-1zM547 568h2v1h-2zM545 569h2v1h-2zM544 570h1v1h-1zM542 571h2v1h-2zM540 572h2v1h-2zM538 573h2v1h-2zM537 574h1v1h-1zM535 575h2v1h-2zM533 576h2v1h-2zM531 577h2v1h-2zM530 578h1v1h-1zM528 579h2v1h-2zM526 580h2v1h-2zM525 581h1v1h-1zM523 582h2v1h-2zM521 583h2v1h-2zM519 584h2v1h-2zM518 585h1v1h-1zM516 586h2v1h-2zM514 587h2v1h-2zM512 588h2v1h-2zM511 589h1v1h-1zM509 590h2v1h-2zM507 591h2v1h-2zM505 592h2v1h-2zM504 593h1v1h-1zM502 594h2v1h-2zM500 595h2v1h-2zM499 596h1v1h-1zM497 597h2v1h-2zM495 598h2v1h-2zM493 599h2v1h-2zM492 600h1v1h-1zM490 601h2v1h-2zM488 602h2v1h-2zM486 603h2v1h-2zM485 604h1v1h-1zM483 605h2v1h-2zM481 606h2v1h-2zM479 607h2v1h-2zM478 608h1v1h-1zM476 609h2v1h-2zM474 610h2v1h-2zM473 611h1v1h-1zM471 612h2v1h-2zM469 613h2v1h-2zM467 614h2v1h-2zM466 615h1v1h-1zM464 616h2v1h-2zM462 617h2v1h-2zM460 618h2v1h-2zM459 619h1v1h-1zM457 620h2v1h-2zM455 621h2v1h-2zM453 622h2v1h-2zM452 623h1v1h-1zM450 624h2v1h-2zM448 625h2v1h-2zM447 626h1v1h-1zM445 627h2v1h-2zM443 628h2v1h-2zM441 629h2v1h-2zM440 630h1v1h-1z" fill="#000"/>
<path d="M764 443h1v1h-1zM763 444h1v2h-1zM762 446h1v1h-1zM761 447h1v1h-1zM760 448h1v2h-1zM759 450h1v1h-1zM758 451h1v2h-1zM757 453h1v1h-1zM756 454h1v1h-1zM755 455h1v2h-1zM754 457h1v1h-1zM753 458h1v2h-1zM752 460h1v1h-1zM751 461h1v1h-1zM750 462h1v2h-1zM749 464h1v1h-1zM748 465h1v1h-1zM747 466h1v2h-1zM746 468h1v1h-1zM745 469h1v2h-1zM744 471h1v1h-1zM743 472h1v1h-1zM742 473h1v2h-1zM741 475h1v1h-1zM740 476h1v2h-1zM739 478h1v1h-1zM738 479h1v1h-1zM737 480h1v2h-1zM736 482h1v1h-1zM735 483h1v2h-1zM734 485h1v1h-1zM733 486h1v1h-1zM732 487h1v2h-1zM731 489h1v1h-1zM730 490h1v2h-1zM729 492h1v1h-1zM728 493h1v1h-1zM727 494h1v2h-1zM726 496h1v1h-1zM725 497h1v1h-1zM724 498h1v2h-1zM723 500h1v1h-1zM722 501h1v2h-1zM721 503h1v1h-1zM720 504h1v1h-1zM719 505h1v2h-1zM718 507h1v1h-1zM717 508h1v2h-1zM716 510h1v1h-1zM715 511h1v1h-1zM714 512h1v2h-1zM713 514h1v1h-1zM712 515h1v2h-1zM711 517h1v1h-1zM710 518h1v1h-1zM709 519h1v2h-1zM708 521h1v1h-1zM707 522h1v2h-1zM706 524h1v1h-1zM705 525h1v1h-1zM704 526h1v2h-1zM703 528h1v1h-1zM702 529h1v1h-1zM701 530h1v2h-1zM700 532h1v1h-1zM699 533h1v2h-1zM698 535h1v1h-1zM697 536h1v1h-1zM696 537h1v2h-1zM695 539h1v1h-1zM694 540h1v2h-1zM693 542h1v1h-1zM692 543h1v1h-1zM691 544h1v2h-1zM690 546h1v1h-1zM689 547h1v2h-1zM688 549h1v1h-1zM687 550h1v1h-1zM686 551h1v2h-1zM685 553h1v1h-1zM684 554h1v2h-1zM683 556h1v1h-1zM682 557h1v1h-1zM681 558h1v2h-1zM680 560h1v1h-1zM679 561h1v1h-1zM678 562h1v2h-1zM677 564h1v1h-1zM676 565h1v2h-1zM675 567h1v1h-1zM674 568h1v1h-1zM673 569h1v2h-1zM672 571h1v1h-1zM671 572h1v2h-1zM670 574h1v1h-1zM669 575h1v1h-1zM668 576h1v2h-1zM667 578h1v1h-1zM666 579h1v2h-1zM665 581h1v1h-1zM664 582h1v1h-1zM663 583h1v2h-1zM662 585h1v1h-1zM661 586h1v2h-1zM660 588h1v1h-1zM659 589h1v1h-1zM658 590h1v2h-1zM657 592h1v1h-1zM656 593h1v1h-1zM655 594h1v2h-1zM654 596h1v1h-1zM653 597h1v2h-1zM652 599h1v1h-1zM651 600h1v1h-1zM650 601h1v2h-1zM649 603h1v1h-1zM648 604h1v2h-1zM647 606h1v1h-1zM646 607h1v1h-1zM645 608h1v2h-1zM644 610h1v1h-1zM639 610h6v1h-6zM629 611h10v1h-10zM619 612h10v1h-10zM609 613h10v1h-10zM599 614h10v1h-10zM588 615h11v1h-11zM578 616h10v1h-10zM568 617h10v1h-10zM558 618h10v1h-10zM548 619h10v1h-10zM537 620h11v1h-11zM527 621h10v1h-10zM517 622h10v1h-10zM507 623h10v1h-10zM497 624h10v1h-10zM486 625h11v1h-11zM476 626h10v1h-10zM466 627h10v1h-10zM456 628h10v1h-10zM446 629h10v1h-10zM440 630h6v1h-6z" fill="#000"/>
<path d="M485 626h1v1h-1zM484 624h1v2h-1zM483 622h1v2h-1zM482 620h1v2h-1zM481 618h1v2h-1zM480 616h1v2h-1zM479 614h1v2h-1zM478 612h1v2h-1zM477 610h1v2h-1zM476 609h1v1h-1z" fill="#0c0c84"/><polygon points="476.5,609.7 479.9,613.6 478.6,613.4 478.1,614.6" fill="#0c0c84"/>
<path d="M531 621h1v1h-1zM530 619h1v2h-1zM529 617h1v2h-1zM528 615h1v2h-1zM527 614h1v1h-1zM526 612h1v2h-1zM525 610h1v2h-1zM524 608h1v2h-1zM523 607h1v1h-1zM522 605h1v2h-1zM521 603h1v2h-1zM520 602h1v1h-1zM519 600h1v2h-1zM518 598h1v2h-1zM517 596h1v2h-1zM516 595h1v1h-1zM515 593h1v2h-1zM514 591h1v2h-1zM513 589h1v2h-1zM512 588h1v1h-1z" fill="#0c0c84"/><polygon points="512.5,589.0 519.2,596.7 516.7,596.4 515.7,598.7" fill="#0c0c84"/>
<path d="M576 617h1v1h-1zM575 615h1v2h-1zM574 613h1v2h-1zM573 611h1v2h-1zM572 610h1v1h-1zM571 608h1v2h-1zM570 606h1v2h-1zM569 604h1v2h-1zM568 603h1v1h-1zM567 601h1v2h-1zM566 599h1v2h-1zM565 597h1v2h-1zM564 596h1v1h-1zM563 594h1v2h-1zM562 592h1v2h-1zM561 590h1v2h-1zM560 589h1v1h-1zM559 587h1v2h-1zM558 585h1v2h-1zM557 583h1v2h-1zM556 582h1v1h-1zM555 580h1v2h-1zM554 578h1v2h-1zM553 576h1v2h-1zM552 575h1v1h-1zM551 573h1v2h-1zM550 571h1v2h-1zM549 569h1v2h-1zM548 568h1v1h-1z" fill="#0c0c84"/><polygon points="548.4,568.2 558.6,579.8 554.8,579.3 553.4,582.8" fill="#0c0c84"/>
<path d="M622 613h1v1h-1zM621 611h1v2h-1zM620 609h1v2h-1zM619 607h1v2h-1zM618 606h1v1h-1zM617 604h1v2h-1zM616 602h1v2h-1zM615 600h1v2h-1zM614 599h1v1h-1zM613 597h1v2h-1zM612 595h1v2h-1zM611 594h1v1h-1zM610 592h1v2h-1zM609 590h1v2h-1zM608 588h1v2h-1zM607 587h1v1h-1zM606 585h1v2h-1zM605 583h1v2h-1zM604 581h1v2h-1zM603 580h1v1h-1zM602 578h1v2h-1zM601 576h1v2h-1zM600 574h1v2h-1zM599 573h1v1h-1zM598 571h1v2h-1zM597 569h1v2h-1zM596 567h1v2h-1zM595 566h1v1h-1zM594 564h1v2h-1zM593 562h1v2h-1zM592 561h1v1h-1zM591 559h1v2h-1zM590 557h1v2h-1zM589 555h1v2h-1zM588 554h1v1h-1zM587 552h1v2h-1zM586 550h1v2h-1zM585 548h1v2h-1zM584 547h1v1h-1z" fill="#0c0c84"/><polygon points="584.4,547.4 598.0,562.8 593.0,562.2 591.0,566.9" fill="#0c0c84"/>
<path d="M658 592h1v1h-1zM657 590h1v2h-1zM656 588h1v2h-1zM655 586h1v2h-1zM654 585h1v1h-1zM653 583h1v2h-1zM652 581h1v2h-1zM651 579h1v2h-1zM650 578h1v1h-1zM649 576h1v2h-1zM648 574h1v2h-1zM647 573h1v1h-1zM646 571h1v2h-1zM645 569h1v2h-1zM644 567h1v2h-1zM643 566h1v1h-1zM642 564h1v2h-1zM641 562h1v2h-1zM640 560h1v2h-1zM639 559h1v1h-1zM638 557h1v2h-1zM637 555h1v2h-1zM636 553h1v2h-1zM635 552h1v1h-1zM634 550h1v2h-1zM633 548h1v2h-1zM632 546h1v2h-1zM631 545h1v1h-1zM630 543h1v2h-1zM629 541h1v2h-1zM628 540h1v1h-1zM627 538h1v2h-1zM626 536h1v2h-1zM625 534h1v2h-1zM624 533h1v1h-1zM623 531h1v2h-1zM622 529h1v2h-1zM621 527h1v2h-1zM620 526h1v1h-1z" fill="#0c0c84"/><polygon points="620.4,526.7 633.9,542.1 628.9,541.5 627.0,546.1" fill="#0c0c84"/>
<path d="M684 555h1v1h-1zM683 553h1v2h-1zM682 551h1v2h-1zM681 549h1v2h-1zM680 547h1v2h-1zM679 546h1v1h-1zM678 544h1v2h-1zM677 542h1v2h-1zM676 540h1v2h-1zM675 539h1v1h-1zM674 537h1v2h-1zM673 535h1v2h-1zM672 533h1v2h-1zM671 531h1v2h-1zM670 530h1v1h-1zM669 528h1v2h-1zM668 526h1v2h-1zM667 524h1v2h-1zM666 522h1v2h-1zM665 521h1v1h-1zM664 519h1v2h-1zM663 517h1v2h-1zM662 515h1v2h-1zM661 514h1v1h-1zM660 512h1v2h-1zM659 510h1v2h-1zM658 508h1v2h-1zM657 506h1v2h-1zM656 505h1v1h-1z" fill="#0c0c84"/><polygon points="656.4,505.9 666.5,517.5 662.8,517.0 661.3,520.5" fill="#0c0c84"/>
<path d="M711 518h1v1h-1zM710 516h1v2h-1zM709 514h1v2h-1zM708 512h1v2h-1zM707 511h1v1h-1zM706 509h1v2h-1zM705 507h1v2h-1zM704 505h1v2h-1zM703 504h1v1h-1zM702 502h1v2h-1zM701 500h1v2h-1zM700 499h1v1h-1zM699 497h1v2h-1zM698 495h1v2h-1zM697 493h1v2h-1zM696 492h1v1h-1zM695 490h1v2h-1zM694 488h1v2h-1zM693 486h1v2h-1zM692 485h1v1h-1z" fill="#0c0c84"/><polygon points="692.3,485.1 699.1,492.8 696.6,492.5 695.6,494.8" fill="#0c0c84"/>
<path d="M737 480h1v1h-1zM736 478h1v2h-1zM735 476h1v2h-1zM734 474h1v2h-1zM733 472h1v2h-1zM732 471h1v1h-1zM731 469h1v2h-1zM730 467h1v2h-1zM729 465h1v2h-1zM728 464h1v1h-1z" fill="#0c0c84"/><polygon points="728.3,464.4 731.7,468.2 730.5,468.1 730.0,469.2" fill="#0c0c84"/>
<rect x="440" y="630" width="86" height="1" fill="#000"/><rect x="737" y="277" width="57" height="1" fill="#000"/><rect x="798" y="256" width="56" height="1" fill="#000"/>
<rect x="440" y="160" width="1" height="30" fill="#000"/><rect x="736" y="160" width="1" height="30" fill="#000"/><rect x="854" y="160" width="1" height="30" fill="#000"/><rect x="441" y="174" width="413" height="1" fill="#000"/>
<rect x="443" y="173" width="6" height="3" fill="#000"/><rect x="449" y="172" width="4" height="5" fill="#000"/><rect x="728" y="173" width="6" height="3" fill="#000"/><rect x="724" y="172" width="4" height="5" fill="#000"/><rect x="739" y="173" width="6" height="3" fill="#000"/><rect x="745" y="172" width="4" height="5" fill="#000"/><rect x="846" y="173" width="6" height="3" fill="#000"/><rect x="842" y="172" width="4" height="5" fill="#000"/>
<rect x="357" y="258" width="1" height="373" fill="#000"/><rect x="343" y="277" width="30" height="1" fill="#000"/><rect x="343" y="630" width="30" height="1" fill="#000"/><rect x="343" y="256" width="30" height="1" fill="#000"/><rect x="356" y="280" width="3" height="6" fill="#000"/><rect x="355" y="286" width="5" height="4" fill="#000"/><rect x="356" y="622" width="3" height="6" fill="#000"/><rect x="355" y="618" width="5" height="4" fill="#000"/>
<rect x="1024" y="257" width="1" height="135" fill="#000"/><rect x="1010" y="256" width="30" height="1" fill="#000"/><rect x="1010" y="391" width="30" height="1" fill="#000"/><rect x="1023" y="259" width="3" height="6" fill="#000"/><rect x="1022" y="265" width="5" height="4" fill="#000"/><rect x="1023" y="383" width="3" height="6" fill="#000"/><rect x="1022" y="379" width="5" height="4" fill="#000"/>
</g>
<g>
<rect x="534.0" y="159" width="107.6" height="15" fill="#fff" shape-rendering="crispEdges"/><text x="534.6" y="171" font-size="12px" fill="#950a22" textLength="107.0" lengthAdjust="spacing" xml:space="preserve">Dist. to Slope Crest</text>
<rect x="534.0" y="174" width="60.1" height="15" fill="#fff" shape-rendering="crispEdges"/><text x="534.6" y="186" font-size="12px" fill="#950a22" textLength="59.5" lengthAdjust="spacing" xml:space="preserve"> 50.346  m</text>
<rect x="745.0" y="159" width="99.1" height="15" fill="#fff" shape-rendering="crispEdges"/><text x="745.6" y="171" font-size="12px" fill="#950a22" textLength="98.5" lengthAdjust="spacing" xml:space="preserve">Upper Face Width</text>
<rect x="745.0" y="174" width="60.1" height="15" fill="#fff" shape-rendering="crispEdges"/><text x="745.6" y="186" font-size="12px" fill="#950a22" textLength="59.5" lengthAdjust="spacing" xml:space="preserve"> 20.000  m</text>
<rect x="305.0" y="252" width="104.6" height="15" fill="#fff" shape-rendering="crispEdges"/><text x="305.6" y="264" font-size="12px" fill="#950a22" textLength="104.0" lengthAdjust="spacing" xml:space="preserve">Upper Face Height</text>
<rect x="305.0" y="267" width="52.6" height="15" fill="#fff" shape-rendering="crispEdges"/><text x="305.6" y="279" font-size="12px" fill="#950a22" textLength="52.0" lengthAdjust="spacing" xml:space="preserve"> 3.527  m</text>
<rect x="321.4" y="439" width="72.6" height="15" fill="#fff" shape-rendering="crispEdges"/><text x="322.0" y="451" font-size="12px" fill="#950a22" textLength="72.0" lengthAdjust="spacing" xml:space="preserve">Slope Height</text>
<rect x="321.4" y="454" width="59.6" height="15" fill="#fff" shape-rendering="crispEdges"/><text x="322.0" y="466" font-size="12px" fill="#950a22" textLength="59.0" lengthAdjust="spacing" xml:space="preserve"> 60.000  m</text>
<rect x="984.1" y="309" width="81.1" height="15" fill="#fff" shape-rendering="crispEdges"/><text x="984.7" y="321" font-size="12px" fill="#950a22" textLength="80.5" lengthAdjust="spacing" xml:space="preserve">Tension Crack</text>
<rect x="984.1" y="324" width="60.1" height="15" fill="#fff" shape-rendering="crispEdges"/><text x="984.7" y="336" font-size="12px" fill="#950a22" textLength="59.5" lengthAdjust="spacing" xml:space="preserve"> 22.912  m</text>
<rect x="523.9" y="585" width="105.0" height="15" fill="#fff" shape-rendering="crispEdges"/><text x="524.5" y="597" font-size="12px" fill="#0aa35a" textLength="104.4" lengthAdjust="spacing" xml:space="preserve">Slope Angle 50.0 ° </text>
<rect x="497.0" y="608" width="145.0" height="15" fill="#fff" shape-rendering="crispEdges"/><text x="497.6" y="620" font-size="12px" fill="#0aa35a" textLength="144.4" lengthAdjust="spacing" xml:space="preserve">Failure Plane Angle 30.0 ° </text>
<rect x="795.0" y="265" width="136.5" height="15" fill="#fff" shape-rendering="crispEdges"/><text x="795.6" y="277" font-size="12px" fill="#0aa35a" textLength="135.9" lengthAdjust="spacing" xml:space="preserve">Upper Face Angle 10.0 ° </text>
<rect x="660.1" y="290" width="152.0" height="15" fill="#fff" shape-rendering="crispEdges"/><text x="660.7" y="302" font-size="12px" fill="#0aa35a" textLength="151.4" lengthAdjust="spacing" xml:space="preserve">Tension Crack Angle 90.0 ° </text>
<text x="649.6" y="619" font-size="12px" fill="#1a0a96" textLength="181.5" lengthAdjust="spacing" xml:space="preserve">Peak Water Pressure 0.156  MPa</text>
</g>
<g shape-rendering="crispEdges">
<path d="M515.5,630.5 A75,75 0 0 0 488.7,573.0" fill="none" stroke="#000" stroke-width="1"/><path d="M487.5,630.5 A47,47 0 0 0 481.2,607.0" fill="none" stroke="#000" stroke-width="1"/><path d="M783.5,277.5 A47,47 0 0 0 782.8,269.3" fill="none" stroke="#000" stroke-width="1"/><path d="M807.5,257 A47,47 0 0 0 854.5,304" fill="none" stroke="#000" stroke-width="1"/>
</g>
<g shape-rendering="crispEdges">
<path d="M703 485h1v1h-1zM701 486h2v1h-2zM699 487h2v1h-2zM697 488h2v1h-2zM696 489h1v1h-1zM694 490h2v1h-2zM692 491h2v1h-2zM691 492h1v1h-1zM689 493h2v1h-2zM687 494h2v1h-2zM685 495h2v1h-2zM684 496h1v1h-1zM682 497h2v1h-2zM680 498h2v1h-2zM678 499h2v1h-2zM677 500h1v1h-1zM675 501h2v1h-2zM673 502h2v1h-2zM672 503h1v1h-1zM670 504h2v1h-2zM668 505h2v1h-2zM666 506h2v1h-2zM665 507h1v1h-1zM663 508h2v1h-2zM661 509h2v1h-2zM659 510h2v1h-2zM658 511h1v1h-1zM656 512h2v1h-2zM654 513h2v1h-2zM653 514h1v1h-1zM651 515h2v1h-2zM649 516h2v1h-2zM647 517h2v1h-2zM646 518h1v1h-1zM644 519h2v1h-2zM642 520h2v1h-2zM641 521h1v1h-1zM639 522h2v1h-2zM637 523h2v1h-2zM635 524h2v1h-2zM634 525h1v1h-1zM632 526h2v1h-2zM630 527h2v1h-2zM628 528h2v1h-2zM627 529h1v1h-1zM625 530h2v1h-2zM623 531h2v1h-2zM622 532h1v1h-1zM620 533h2v1h-2zM618 534h2v1h-2zM616 535h2v1h-2zM615 536h1v1h-1zM613 537h2v1h-2zM611 538h2v1h-2zM609 539h2v1h-2zM608 540h1v1h-1zM606 541h2v1h-2zM604 542h2v1h-2zM603 543h1v1h-1zM601 544h2v1h-2zM599 545h2v1h-2zM597 546h2v1h-2zM596 547h1v1h-1z" fill="#c2000c"/><polygon points="596.0,546.8 620.2,528.7 618.9,533.6 623.8,534.9" fill="#c2000c"/><path d="M711 621h1v1h-1zM710 619h1v2h-1zM709 617h1v2h-1zM708 615h1v2h-1zM707 614h1v1h-1zM706 612h1v2h-1zM705 610h1v2h-1zM704 609h1v1h-1zM703 607h1v2h-1zM702 605h1v2h-1zM701 603h1v2h-1zM700 602h1v1h-1zM699 600h1v2h-1zM698 598h1v2h-1zM697 597h1v1h-1zM696 595h1v2h-1zM695 593h1v2h-1zM694 591h1v2h-1zM693 590h1v1h-1zM692 588h1v2h-1zM691 586h1v2h-1zM690 584h1v2h-1zM689 583h1v1h-1zM688 581h1v2h-1zM687 579h1v2h-1zM686 578h1v1h-1zM685 576h1v2h-1zM684 574h1v2h-1zM683 572h1v2h-1zM682 571h1v1h-1zM681 569h1v2h-1zM680 567h1v2h-1zM679 566h1v1h-1zM678 564h1v2h-1zM677 562h1v2h-1zM676 560h1v2h-1zM675 559h1v1h-1zM674 557h1v2h-1zM673 555h1v2h-1zM672 554h1v1h-1zM671 552h1v2h-1zM670 550h1v2h-1zM669 548h1v2h-1zM668 547h1v1h-1zM667 545h1v2h-1zM666 543h1v2h-1zM665 541h1v2h-1zM664 540h1v1h-1zM663 538h1v2h-1zM662 536h1v2h-1zM661 535h1v1h-1zM660 533h1v2h-1zM659 531h1v2h-1zM658 529h1v2h-1zM657 528h1v1h-1zM656 526h1v2h-1zM655 524h1v2h-1zM654 523h1v1h-1zM653 521h1v2h-1zM652 519h1v2h-1zM651 517h1v2h-1zM650 516h1v1h-1z" fill="#c2000c"/><polygon points="650.0,515.5 668.1,539.7 663.2,538.4 661.9,543.3" fill="#c2000c"/>
</g>
<g>
<rect x="703.9" y="476" width="151.6" height="16" fill="#fff" shape-rendering="crispEdges"/><text x="704.5" y="489" font-size="13px" fill="#c90a28" textLength="151.0" lengthAdjust="spacing" xml:space="preserve">Driving Force 17.78 MN/m</text>
<rect x="712.9" y="614" width="154.6" height="16" fill="#fff" shape-rendering="crispEdges"/><text x="713.5" y="627" font-size="13px" fill="#c90a28" textLength="154.0" lengthAdjust="spacing" xml:space="preserve">Normal Force 25.85 MN/m</text>
</g>
<text x="33" y="97" font-size="12px" font-weight="bold" letter-spacing="-0.12">Filename: Tutorial 1 Quick Start.pln4</text>
<text x="33" y="112" font-size="12px" font-weight="bold" letter-spacing="-0.1">Project Title: RocPlane - Quick Start Tutorial</text>
<g shape-rendering="crispEdges"><rect x="1080" y="562" width="275" height="223" fill="#fff" stroke="#000" stroke-width="2"/><rect x="1081" y="583" width="273" height="1" fill="#000"/><rect x="1081" y="603" width="273" height="1" fill="#000"/><rect x="1081" y="623" width="273" height="1" fill="#000"/><rect x="1081" y="643" width="273" height="1" fill="#000"/><rect x="1081" y="663" width="273" height="1" fill="#000"/><rect x="1081" y="683" width="273" height="1" fill="#000"/><rect x="1081" y="703" width="273" height="1" fill="#000"/><rect x="1081" y="723" width="273" height="1" fill="#000"/><rect x="1081" y="743" width="273" height="1" fill="#000"/><rect x="1081" y="763" width="273" height="1" fill="#000"/><rect x="1256" y="563" width="1" height="221" fill="#000"/></g>
<g font-size="12px" text-anchor="middle" fill="#000" letter-spacing="0.1">
<text x="1169.2" y="578">Factor of Safety</text><text x="1305.7" y="578">1.47</text>
<text x="1169.2" y="598">Driving Force</text><text x="1305.7" y="598">17.78 MN/m</text>
<text x="1169.2" y="618">Resisting Force</text><text x="1305.7" y="618">26.22 MN/m</text>
<text x="1169.2" y="638">Wedge Weight</text><text x="1305.7" y="638">35.56 MN/m</text>
<text x="1169.2" y="658">Wedge Volume</text><text x="1305.7" y="658">1317.12 m^3/ m</text>
<text x="1169.2" y="678">Shear Strength</text><text x="1305.7" y="678">0.32 MPa</text>
<text x="1169.2" y="698">Shear Resistance</text><text x="1305.7" y="698">26.22 MN/m</text>
<text x="1169.2" y="718">Normal Force</text><text x="1305.7" y="718">25.85 MN/m</text>
<text x="1169.2" y="738">Plane Waviness</text><text x="1305.7" y="738">0.0°</text>
<text x="1169.2" y="758">Water Force on Failure Plane</text><text x="1305.7" y="758">4.95 MN/m</text>
<text x="1169.2" y="778">Water Force on Tension Crack</text><text x="1305.7" y="778">0.00 MN/m</text>
</g>
</svg>
<div class="ln" style="left:1364px;top:79px;width:236px;height:1px;background:#a0a0a0;"></div>
<div class="ln" style="left:1364px;top:80px;width:236px;height:1px;background:#ffffff;"></div>
<div class="ln" style="left:1364px;top:406px;width:7px;height:126px;background:#f8f8f8;"></div>
<div class="ln" style="left:1364px;top:406px;width:7px;height:1px;background:#a0a0a0;"></div>
<div class="ln" style="left:1364px;top:532px;width:7px;height:1px;background:#a0a0a0;"></div>
<svg class="a" style="left:1364px;top:406px" width="7" height="127" viewBox="0 0 7 127" shape-rendering="crispEdges">
<polygon points="1.5,4 5.5,7.5 1.5,11" fill="#000"/><polygon points="1.5,60 5.5,63.5 1.5,67" fill="#000"/><polygon points="1.5,116 5.5,119.5 1.5,123" fill="#000"/>
<line x1="4.5" y1="15" x2="4.5" y2="56" stroke="#808080" stroke-dasharray="1 2"/><line x1="4.5" y1="71" x2="4.5" y2="112" stroke="#808080" stroke-dasharray="1 2"/>
</svg>
<div class="ln" style="left:1371px;top:81px;width:1px;height:778px;background:#a0a0a0;"></div>
<div class="ln" style="left:1372px;top:81px;width:1px;height:778px;background:#696969;"></div>
<div class="ln" style="left:1373px;top:81px;width:1px;height:777px;background:#fafafa;"></div>
<div class="ln" style="left:1364px;top:858px;width:236px;height:1px;background:#a0a0a0;"></div>
<div class="ln" style="left:1364px;top:859px;width:236px;height:1px;background:#ffffff;"></div>
<div class="ln" style="left:1363px;top:843px;width:1px;height:15px;background:#d9d9d9;"></div>
<div class="a" style="left:1492px;top:90px;width:97px;height:19px;background:#e1e1e1;border:1px solid #adadad"></div>
<svg class="a" style="left:1495px;top:91px" width="18" height="19" viewBox="0 0 18 19">
<path d="M2.2,1.6 H15.8 V2.6 L10.600,8 V16.6 L7.6,14.800 V8 L2.2,2.6 Z" fill="#b5dbff" stroke="#1b6bd6" stroke-width="1.2" stroke-linejoin="round"/>
</svg>
<div class="ln" style="left:1382px;top:117px;width:208px;height:727px;background:#ffffff;"></div>
<div class="ln" style="left:1382px;top:117px;width:207px;height:1px;background:#a0a0a0;"></div>
<div class="ln" style="left:1382px;top:117px;width:1px;height:726px;background:#a0a0a0;"></div>
<div class="ln" style="left:1383px;top:118px;width:205px;height:1px;background:#696969;"></div>
<div class="ln" style="left:1383px;top:118px;width:1px;height:724px;background:#696969;"></div>
<div class="ln" style="left:1588px;top:118px;width:1px;height:725px;background:#e3e3e3;"></div>
<div class="ln" style="left:1383px;top:842px;width:206px;height:1px;background:#e3e3e3;"></div>
<svg id="pn" class="a" style="left:1364px;top:79px" width="236" height="781" viewBox="1364 79 236 781">
<text x="1385" y="105" font-size="11px">Wedge Information:</text><text x="1522" y="105" font-size="11px" textLength="60" lengthAdjust="spacing">Filter List ...</text>
<text x="1385.3" y="135" font-size="16px" font-weight="bold" fill="#404040" textLength="169" lengthAdjust="spacing">Deterministic Analysis</text>
<text x="1385" y="152" font-size="13px">Factor of Safety: 1.47474</text>
<text x="1385" y="168" font-size="13px">Normal Force: 25.8491 MN/m</text>
<text x="1385" y="184" font-size="13px">Normal Stress: 0.318227 MPa</text>
<text x="1385" y="200" font-size="13px">Shear Strength: 0.322825 MPa</text>
<text x="1385" y="216" font-size="13px">Driving Force: 17.7811 MN/m</text>
<text x="1385" y="232" font-size="13px">Resisting Force: 26.2226 MN/m</text>
<text x="1385.3" y="266" font-size="16px" font-weight="bold" fill="#404040">Geometry</text>
<text x="1385" y="283" font-size="13px">Slope Height: 60 m</text>
<text x="1385" y="299" font-size="13px">Wedge Weight: 35.5622 MN/m</text>
<text x="1385" y="315" font-size="13px">Wedge Volume: 1317.12 m3/m</text>
<text x="1385" y="331" font-size="13px">Wedge Height: 60 m</text>
<text x="1385" y="347" font-size="13px">Unit Weight: 0.027 MN/m3</text>
<text x="1385" y="363" font-size="13px">Slope Angle: 50 deg</text>
<text x="1385" y="379" font-size="13px">Failure Plane Angle: 30 deg</text>
<text x="1385" y="395" font-size="13px">Upper Face Angle: 10 deg</text>
<text x="1385" y="411" font-size="13px">Bench Width: Not Present</text>
<text x="1385" y="427" font-size="13px">Waviness: 0 deg</text>
<text x="1385" y="443" font-size="13px">Slope Length: 78.3244 m</text>
<text x="1385" y="459" font-size="13px">Tension Crack Length: 22.9123 m</text>
<text x="1385" y="475" font-size="13px">Failure Plane Length: 81.2285 m</text>
<text x="1385.3" y="509" font-size="16px" font-weight="bold" fill="#404040" textLength="180.5" lengthAdjust="spacing">Tension Crack: Present</text>
<text x="1385" y="526" font-size="13px">Tension Crack Angle: 90 deg</text>
<text x="1385" y="542" font-size="13px">Distance From Crest: 20 m</text>
<text x="1385" y="558" font-size="13px">Tension Crack Length: 22.9123 m</text>
<text x="1385.3" y="592" font-size="16px" font-weight="bold" fill="#404040">Strength</text>
<text x="1385" y="609" font-size="13px">Shear Strength Model: Mohr-</text>
<text x="1385" y="625" font-size="13px">Coulomb</text>
<text x="1385" y="641" font-size="13px">Friction Angle: 35 deg</text>
<text x="1385" y="657" font-size="13px">Cohesion: 0.1 MPa</text>
<text x="1385" y="673" font-size="13px">Shear Strength: 0.322825 MPa</text>
<text x="1385" y="689" font-size="13px">Shear Resistance: 26.2226 MN/m</text>
</svg>

</body></html>
